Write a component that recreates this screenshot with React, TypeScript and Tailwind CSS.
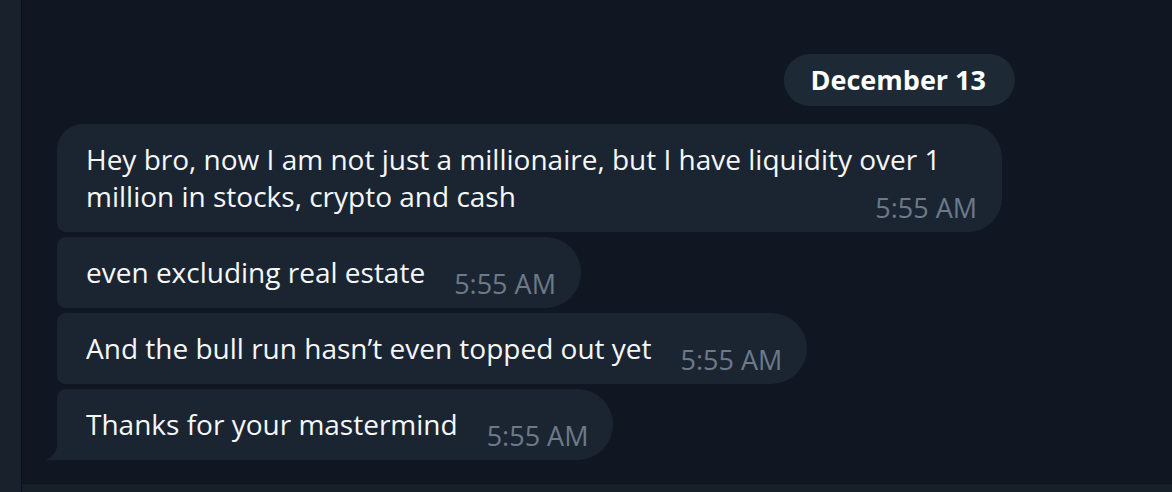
import type { ReactNode } from "react";

type Corner = "first" | "middle" | "last";

const messages: { text: string; time: string; pos: Corner }[] = [
  {
    text: "Hey bro, now I am not just a millionaire, but I have liquidity over 1 million in stocks, crypto and cash",
    time: "5:55 AM",
    pos: "first",
  },
  { text: "even excluding real estate", time: "5:55 AM", pos: "middle" },
  { text: "And the bull run hasn\u2019t even topped out yet", time: "5:55 AM", pos: "middle" },
  { text: "Thanks for your mastermind", time: "5:55 AM", pos: "last" },
];

const radius: Record<Corner, string> = {
  first: "rounded-tl-[26px] rounded-bl-[9px] rounded-r-[34px]",
  middle: "rounded-l-[9px] rounded-r-[36px]",
  last: "rounded-tl-[9px] rounded-bl-none rounded-r-[36px]",
};

function Tail() {
  return (
    <svg
      width="15"
      height="20"
      viewBox="0 0 15 20"
      className="absolute bottom-0 -left-[14px]"
      aria-hidden="true"
    >
      <path d="M15 0 L15 20 L0 20 A15 20 0 0 0 15 0 Z" fill="#1b2532" />
    </svg>
  );
}

function Bubble({ text, time, pos }: { text: string; time: string; pos: Corner }): ReactNode {
  return (
    <div
      className={`relative max-w-[945px] self-start bg-[#1b2532] py-[17px] pl-[29px] pr-[25px] text-[28px] leading-[37px] text-[#f5f7f9] ${radius[pos]}`}
    >
      {text}
      <span className="relative top-[11px] float-right ml-[29px] text-[27px] leading-[37px] text-[#6b7a8a]">
        {time}
      </span>
      {pos === "last" && <Tail />}
    </div>
  );
}

export default function App() {
  return (
    <div
      className="flex h-[492px] w-[1172px] overflow-hidden bg-[#111722]"
      style={{ fontFamily: '"Open Sans", "Noto Sans", sans-serif' }}
    >
      <div className="w-[22px] shrink-0 border-r border-[#0b1119] bg-[#19212c]" />
      <div className="flex flex-1 flex-col">
        <div className="flex flex-1 flex-col">
          <div className="ml-[35px] flex w-[958px] flex-col gap-[5px] pt-[54px]">
            <div className="mb-[13px] self-end rounded-full bg-[#1e2936] pl-[27px] pr-[29px] text-[27px] leading-[52px] font-bold text-white">
              December 13
            </div>
            {messages.map((m, i) => (
              <Bubble key={i} {...m} />
            ))}
          </div>
        </div>
        <div className="h-[9px] border-t border-[#0d131b] bg-[#171f29]" />
      </div>
    </div>
  );
}
